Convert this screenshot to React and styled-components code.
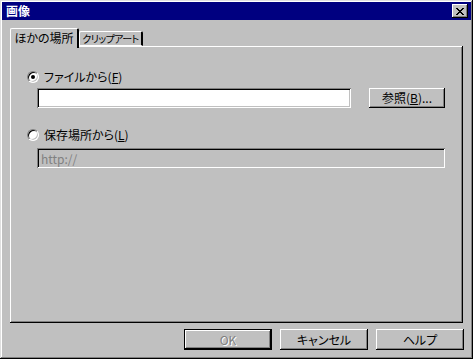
import React from 'react';
import styled, { createGlobalStyle, css } from 'styled-components';

const FACE = '#c0c0c0';
const FONT = '"Noto Sans CJK JP", "DejaVu Sans", sans-serif';

const GlobalStyle = createGlobalStyle`
  html, body {
    margin: 0;
    padding: 0;
    background: ${FACE};
  }
  body {
    font-family: ${FONT};
    font-size: 12px;
    font-feature-settings: "palt";
    color: #000;
  }
`;

const raised = css`
  box-shadow: inset -1px -1px #000, inset 1px 1px #fff,
    inset -2px -2px #808080, inset 2px 2px ${FACE};
`;

const sunken = css`
  box-shadow: inset 1px 1px #808080, inset -1px -1px #fff,
    inset 2px 2px #000, inset -2px -2px ${FACE};
`;

const Window = styled.div`
  width: 473px;
  height: 359px;
  box-sizing: border-box;
  padding: 2px;
  background: ${FACE};
  box-shadow: inset -1px -1px #000, inset 1px 1px #dfdfdf,
    inset -2px -2px #808080, inset 2px 2px #fff;
  display: flex;
  flex-direction: column;
`;

const TitleBar = styled.div`
  height: 18px;
  background: #000080;
  display: flex;
  align-items: center;
  justify-content: space-between;
  padding: 0 3px 0 4px;
`;

const Title = styled.span`
  color: #fff;
  font-weight: bold;
  font-size: 12px;
  line-height: 18px;
`;

const CloseButton = styled.button`
  width: 16px;
  height: 14px;
  padding: 0;
  border: 0;
  background: ${FACE};
  ${raised};
  display: flex;
  align-items: center;
  justify-content: center;
`;

const Body = styled.div`
  flex: 1;
  display: flex;
  flex-direction: column;
  padding: 8px 8px 0 8px;
`;

const TabList = styled.div`
  display: flex;
  align-items: flex-end;
  height: 18px;
  position: relative;
  z-index: 1;
`;

const Tab = styled.div`
  box-sizing: border-box;
  background: ${FACE};
  display: flex;
  align-items: center;
  justify-content: center;
  white-space: nowrap;
  overflow: hidden;
  border-top: 1px solid #fff;
  border-left: 1px solid #fff;
  border-right: 2px solid #000;
  border-top-left-radius: 2px;
  border-top-right-radius: 2px;
  font-size: 12px;
  line-height: 1;
  ${({ $active }) =>
    $active
      ? css`
          width: 69px;
          height: 20px;
          margin-bottom: -2px;
          padding-bottom: 2px;
        `
      : css`
          width: 64px;
          height: 15px;
          border-bottom: 1px solid #fff;
          font-size: 10px;
          letter-spacing: -0.6px;
        `};
`;

const Panel = styled.div`
  height: 277px;
  box-sizing: border-box;
  background: ${FACE};
  box-shadow: inset -1px -1px #000, inset 1px 1px #fff,
    inset -2px -2px #808080;
  padding: 24px 0 0 17px;
  display: flex;
  flex-direction: column;
`;

const RadioRow = styled.label`
  display: flex;
  align-items: center;
  gap: 5px;
  height: 13px;
  font-size: 12px;
  line-height: 13px;
  margin-top: ${({ $top }) => $top || 0}px;
`;

const RadioCircle = styled.span`
  width: 12px;
  height: 12px;
  border-radius: 50%;
  box-sizing: border-box;
  background: #fff;
  border: 1px solid;
  border-color: #808080 #fff #fff #808080;
  box-shadow: inset 1px 1px #000, inset -1px -1px ${FACE};
  display: flex;
  align-items: center;
  justify-content: center;
  &::after {
    content: '';
    width: 4px;
    height: 4px;
    border-radius: 50%;
    background: ${({ $checked }) => ($checked ? '#000' : 'transparent')};
  }
`;

const FieldRow = styled.div`
  display: flex;
  align-items: flex-start;
  gap: 18px;
  margin: ${({ $top }) => $top}px 0 0 10px;
`;

const TextBox = styled.div`
  width: ${({ $w }) => $w}px;
  height: 20px;
  box-sizing: border-box;
  background: ${({ $disabled }) => ($disabled ? FACE : '#fff')};
  ${sunken};
  padding: 0 4px;
  display: flex;
  align-items: center;
  font-size: 12px;
  color: #808080;
`;

const Button = styled.button`
  width: ${({ $w }) => $w}px;
  height: ${({ $h }) => $h || 21}px;
  padding: 0;
  border: 0;
  background: ${FACE};
  font-family: ${FONT};
  font-size: 12px;
  font-feature-settings: "palt";
  line-height: 1;
  white-space: nowrap;
  color: ${({ disabled }) => (disabled ? '#808080' : '#000')};
  ${({ $default }) =>
    $default
      ? css`
          box-shadow: inset -1px -1px #000, inset 1px 1px #000,
            inset -2px -2px #000, inset 2px 2px #fff,
            inset -3px -3px #808080;
        `
      : raised};
  ${({ disabled }) =>
    disabled &&
    css`
      text-shadow: 1px 1px #fff;
    `};
`;

const ButtonBar = styled.div`
  display: flex;
  justify-content: flex-end;
  gap: 8px;
  margin: 6px -1px 0 0;
`;

const Accel = styled.u`
  text-underline-offset: 1px;
`;

export default function App() {
  return (
    <>
      <GlobalStyle />
      <Window>
        <TitleBar>
          <Title>画像</Title>
          <CloseButton aria-label="close">
            <svg width="8" height="7" viewBox="0 0 8 7">
              <path
                d="M0 0h2v1h1v1h2V1h1V0h2v1H7v1H6v1H5v1h1v1h1v1h1v1H6V6H5V5H3v1H2v1H0V6h1V5h1V4h1V3H2V2H1V1H0z"
                fill="#000"
              />
            </svg>
          </CloseButton>
        </TitleBar>
        <Body>
          <TabList>
            <Tab $active>ほかの場所</Tab>
            <Tab>クリップアート</Tab>
          </TabList>
          <Panel>
            <RadioRow>
              <RadioCircle $checked />
              <span>
                ファイルから(<Accel>F</Accel>)
              </span>
            </RadioRow>
            <FieldRow $top={5}>
              <TextBox $w={314} />
              <Button $w={76} $h={20}>
                参照(<Accel>B</Accel>)...
              </Button>
            </FieldRow>
            <RadioRow $top={20}>
              <RadioCircle />
              <span>
                保存場所から(<Accel>L</Accel>)
              </span>
            </RadioRow>
            <FieldRow $top={7}>
              <TextBox $w={408} $disabled>
                http://
              </TextBox>
            </FieldRow>
          </Panel>
          <ButtonBar>
            <Button $w={88} $default disabled>
              OK
            </Button>
            <Button $w={88}>キャンセル</Button>
            <Button $w={88}>ヘルプ</Button>
          </ButtonBar>
        </Body>
      </Window>
    </>
  );
}
